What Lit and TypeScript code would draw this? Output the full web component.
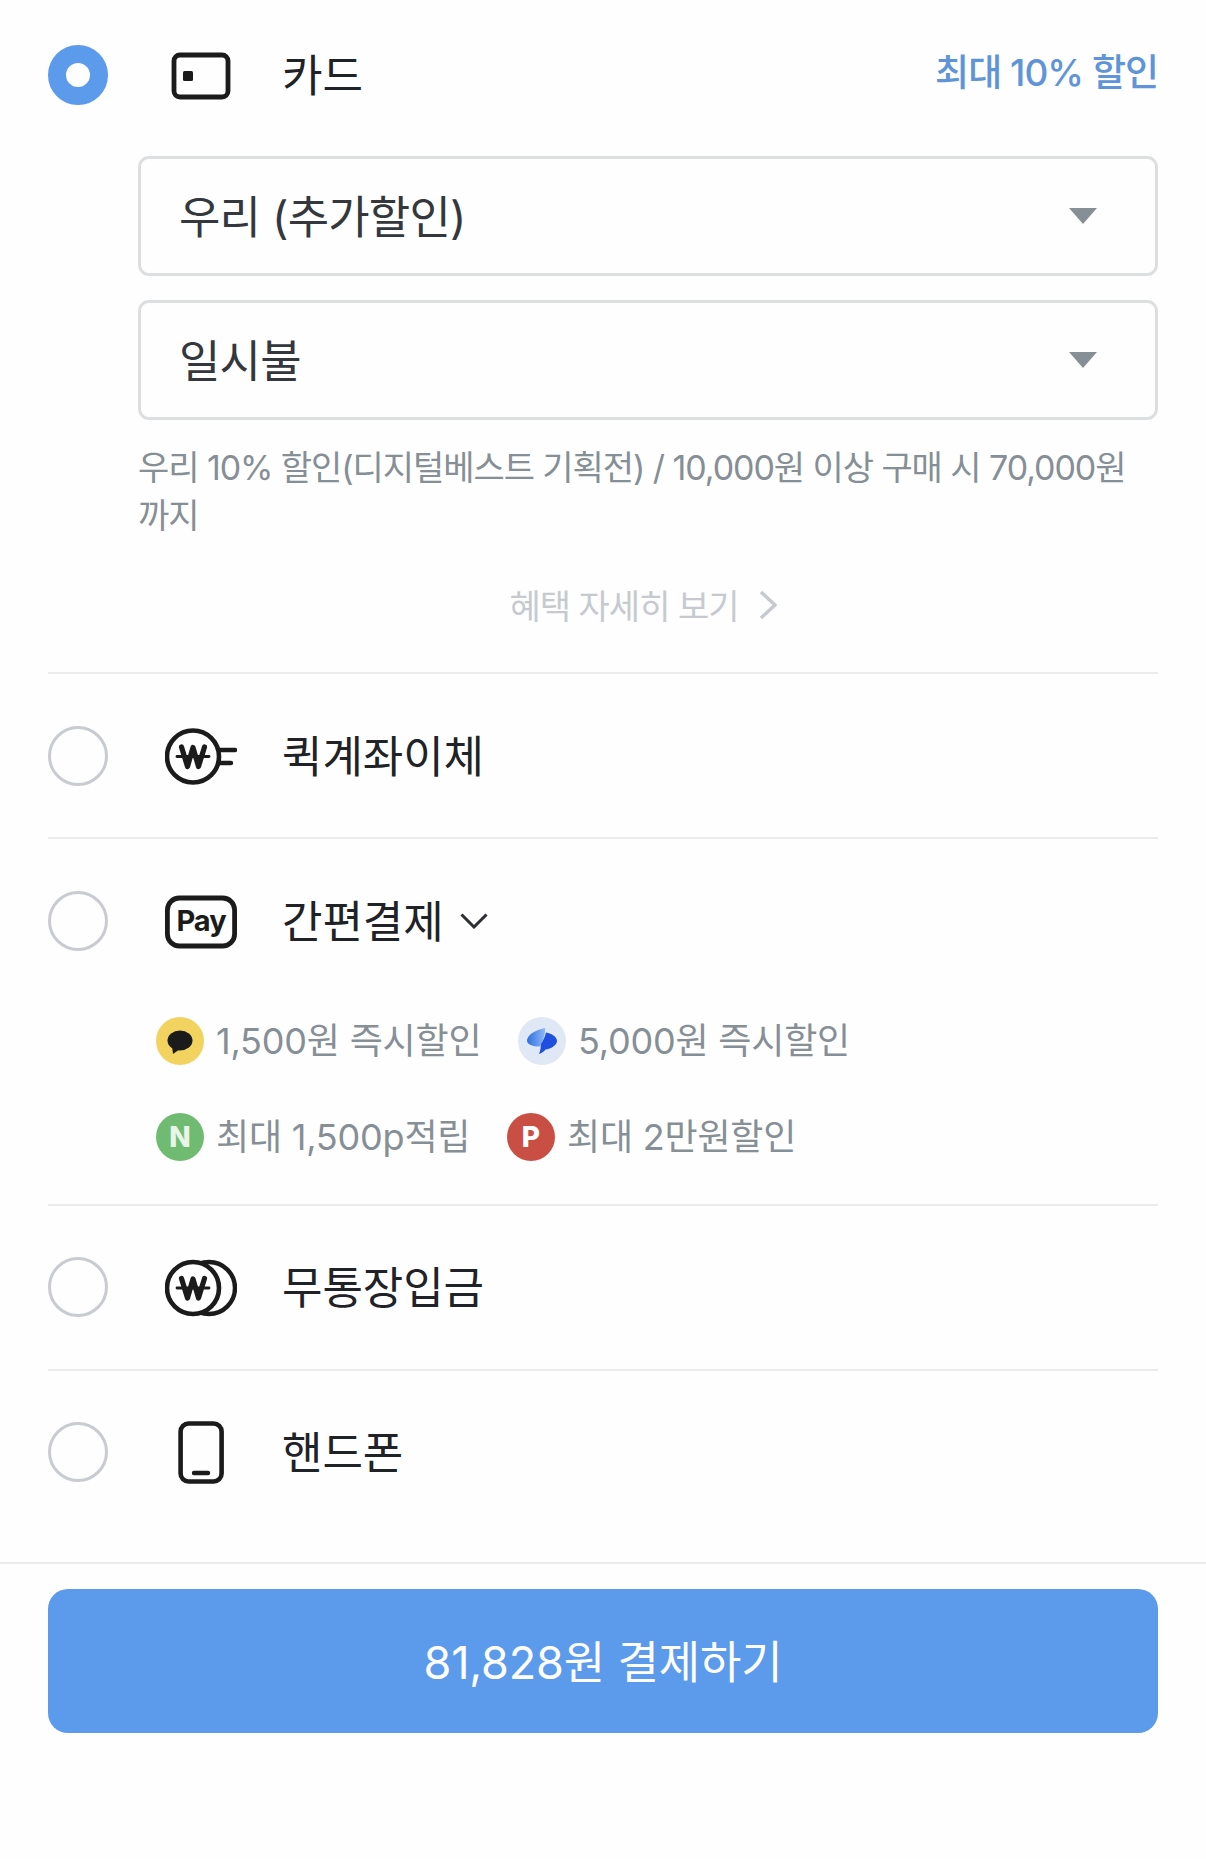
import { LitElement, html, css, svg } from "lit";
import { customElement } from "lit/decorators.js";

const won = (cx: number, cy: number) => svg`
  <g transform="translate(${cx} ${cy})" fill="none" stroke="#1b1b1b" stroke-linecap="round" stroke-linejoin="round">
    <path d="M-11.5 -9.5 L-5.5 10 L0 -9 L5.5 10 L11.5 -9.5" stroke-width="5.2"/>
    <path d="M-16 0 H16" stroke-width="2.8"/>
  </g>`;

const cardIcon = html`<svg viewBox="0 0 72 60" width="72" height="60">
  <rect x="9" y="10" width="54" height="42" rx="6" fill="none" stroke="#1b1b1b" stroke-width="4.8"/>
  <rect x="18" y="26" width="10" height="10" rx="1.5" fill="#1b1b1b"/>
</svg>`;
const plugIcon = html`<svg viewBox="0 0 72 60" width="72" height="60">
  <circle cx="28" cy="30.5" r="26" fill="none" stroke="#1b1b1b" stroke-width="4.6"/>
  ${won(28, 30.5)}
  <path d="M55 24 H70 M55 37 H66" stroke="#1b1b1b" stroke-width="4.4" stroke-linecap="round"/>
</svg>`;
const payIcon = html`<svg viewBox="0 0 72 60" width="72" height="60">
  <rect x="2.4" y="7" width="67.2" height="48" rx="12" fill="none" stroke="#1b1b1b" stroke-width="4.8"/>
  <text class="pay" x="36" y="40" text-anchor="middle">Pay</text>
</svg>`;
const coinIcon = html`<svg viewBox="0 0 72 60" width="72" height="60">
  <circle cx="44" cy="31" r="26" fill="none" stroke="#1b1b1b" stroke-width="4.4"/>
  <circle cx="28" cy="31" r="26" fill="#fefefe" stroke="#1b1b1b" stroke-width="4.6"/>
  ${won(28, 31)}
</svg>`;
const phoneIcon = html`<svg viewBox="0 0 72 66" width="72" height="66">
  <rect x="15.6" y="4.5" width="41" height="58" rx="8" fill="none" stroke="#1b1b1b" stroke-width="4.6"/>
  <path d="M29 54 H43" stroke="#1b1b1b" stroke-width="4.4" stroke-linecap="round"/>
</svg>`;

const arrow = html`<svg class="arrow" viewBox="0 0 28 16" width="28" height="16"><path d="M0 0 H28 L14 16 Z" fill="#868e96"/></svg>`;

const kakao = html`<span class="badge kakao"><svg viewBox="0 0 48 48" width="48" height="48">
  <ellipse cx="24" cy="23.5" rx="12.5" ry="10" fill="#1b1b1b"/>
  <path d="M16 29 L17 37 L24 32 Z" fill="#1b1b1b"/>
</svg></span>`;
const toss = html`<span class="badge tossb"><svg viewBox="0 0 48 48" width="48" height="48">
  <defs>
    <linearGradient id="tg" x1="0" y1="0" x2="1" y2="0"><stop offset="0" stop-color="#2f6fe4"/><stop offset="1" stop-color="#8fb8f2"/></linearGradient>
  </defs>
  <path d="M28 15.5 C34 16.5 39 20 39 24 C39 28 33 32 27.5 32.5 C26 34.5 23.5 36.5 21 37 C22.5 33 23 30 22.5 27 C25 24 27 20 28 15.5 Z" fill="#1f4fe0"/>
  <path d="M27 11 C27.5 18 25 24 21.5 29.5 C15 29.5 9 27.5 9 23.5 C9 19 16 13 27 11 Z" fill="url(#tg)"/>
</svg></span>`;

@customElement("app-root")
export class AppRoot extends LitElement {
  static styles = css`
    :host {
      display: block;
      width: 1206px;
      height: 1859px;
      background: #fefefe;
      font-family: Inter, "Noto Sans CJK KR", "Noto Sans", sans-serif;
      color: #1f2226;
      overflow: hidden;
    }
    .list { padding: 45px 48px 0; }
    .row { display: flex; align-items: center; height: 60px; }
    .radio {
      width: 60px; height: 60px; box-sizing: border-box; flex: none;
      border: 3px solid #c8ccd0; border-radius: 50%; background: #fefefe;
    }
    .radio.on { border: 18px solid #5c9aec; }
    .ico { width: 72px; height: 60px; margin-left: 57px; flex: none; display: flex; align-items: center; justify-content: center; }
    .ico svg { display: block; flex: none; }
    .pay { font: 700 29px Inter, sans-serif; fill: #1b1b1b; letter-spacing: -1px; }
    .label { margin: 2px 0 0 45px; font-size: 44px; line-height: 60px; letter-spacing: -0.1px; }
    .chev { margin-left: 16px; display: block; }
    .promo { margin-left: auto; font-size: 37px; font-weight: 500; line-height: 60px; color: #5f95d8; letter-spacing: -1px; margin-bottom: 4px; }
    .selects { margin: 51px 0 0 90px; display: flex; flex-direction: column; gap: 24px; }
    .select {
      height: 120px; box-sizing: border-box; border: 3px solid #dcdee0; border-radius: 11px;
      display: flex; align-items: center; justify-content: space-between;
      padding: 0 58px 0 38px; font-size: 45px; color: #34383d; letter-spacing: -0.8px;
    }
    .select span { margin-bottom: 4px; }
    .arrow { display: block; }
    .note { margin: 24px 0 0 90px; font-size: 34px; line-height: 48px; color: #868e96; letter-spacing: -1.07px; }
    .link {
      margin-top: 41px; height: 48px; display: flex; align-items: center; justify-content: center; gap: 20px;
      font-size: 34px; color: #c6cace; letter-spacing: -1px; padding-left: 80px;
    }
    .link span { margin-bottom: 2px; }
    .link svg { display: block; }
    hr { border: 0; height: 2px; background: #ebecee; margin: 0; }
    .first { margin-top: 43px; }
    .section { padding: 52px 0 51px; }
    .section.pay-s { padding-bottom: 0; }
    .section.coin { padding: 51px 0 52px; }
    .section.last { padding: 51px 0 0; }
    .benefits { margin-left: 108px; padding: 66px 0 43px; display: flex; flex-direction: column; gap: 48px; }
    .benefit-row { display: flex; height: 48px; }
    .benefit { display: flex; align-items: center; font-size: 36px; color: #868e96; letter-spacing: -0.2px; white-space: nowrap; }
    .benefit > span:last-child { margin-bottom: 7px; }
    .b1 { width: 362px; }
    .b2 { width: 351px; }
    .badge {
      width: 48px; height: 48px; border-radius: 50%; margin-right: 12px; flex: none;
      display: flex; align-items: center; justify-content: center;
      font: 800 28px Inter, sans-serif; color: #fefefe; letter-spacing: 0;
    }
    .badge svg { display: block; }
    .kakao { background: #f3d35f; }
    .tossb { background: #e0e8f6; }
    .naver { background: #6fbb71; color: #e8f5e8; }
    .point { background: #c94f45; }
    .footer { margin-top: 80px; border-top: 2px solid #ebecee; padding: 25px 48px 0; }
    .pay-btn {
      height: 144px; border-radius: 20px; background: #5c9aec; color: #fefefe;
      display: flex; align-items: center; justify-content: center;
      font-size: 45px; letter-spacing: -0.15px;
    }
    .pay-btn span { margin-bottom: 4px; }
  `;

  render() {
    return html`
      <div class="list">
        <div class="row">
          <span class="radio on"></span>
          <span class="ico">${cardIcon}</span>
          <span class="label">카드</span>
          <span class="promo">최대 10% 할인</span>
        </div>
        <div class="selects">
          <div class="select"><span>우리 (추가할인)</span>${arrow}</div>
          <div class="select"><span>일시불</span>${arrow}</div>
        </div>
        <div class="note">우리 10% 할인(디지털베스트 기획전) / 10,000원 이상 구매 시 70,000원<br />까지</div>
        <div class="link">
          <span>혜택 자세히 보기</span>
          <svg viewBox="0 0 18 30" width="18" height="30"><path d="M2 2 L16 15 L2 28" fill="none" stroke="#c6cace" stroke-width="3.5"/></svg>
        </div>
        <hr class="first" />
        <div class="section">
          <div class="row">
            <span class="radio"></span>
            <span class="ico">${plugIcon}</span>
            <span class="label">퀵계좌이체</span>
          </div>
        </div>
        <hr />
        <div class="section pay-s">
          <div class="row">
            <span class="radio"></span>
            <span class="ico">${payIcon}</span>
            <span class="label">간편결제</span>
            <svg class="chev" viewBox="0 0 28 16" width="28" height="16"><path d="M1.5 1.5 L14 14 L26.5 1.5" fill="none" stroke="#2b2e33" stroke-width="3"/></svg>
          </div>
          <div class="benefits">
            <div class="benefit-row">
              <div class="benefit b1">${kakao}<span>1,500원 즉시할인</span></div>
              <div class="benefit">${toss}<span>5,000원 즉시할인</span></div>
            </div>
            <div class="benefit-row">
              <div class="benefit b2"><span class="badge naver">N</span><span>최대 1,500p적립</span></div>
              <div class="benefit"><span class="badge point">P</span><span>최대 2만원할인</span></div>
            </div>
          </div>
        </div>
        <hr />
        <div class="section coin">
          <div class="row">
            <span class="radio"></span>
            <span class="ico">${coinIcon}</span>
            <span class="label">무통장입금</span>
          </div>
        </div>
        <hr />
        <div class="section last">
          <div class="row">
            <span class="radio"></span>
            <span class="ico">${phoneIcon}</span>
            <span class="label">핸드폰</span>
          </div>
        </div>
      </div>
      <div class="footer">
        <div class="pay-btn"><span>81,828원 결제하기</span></div>
      </div>
    `;
  }
}
